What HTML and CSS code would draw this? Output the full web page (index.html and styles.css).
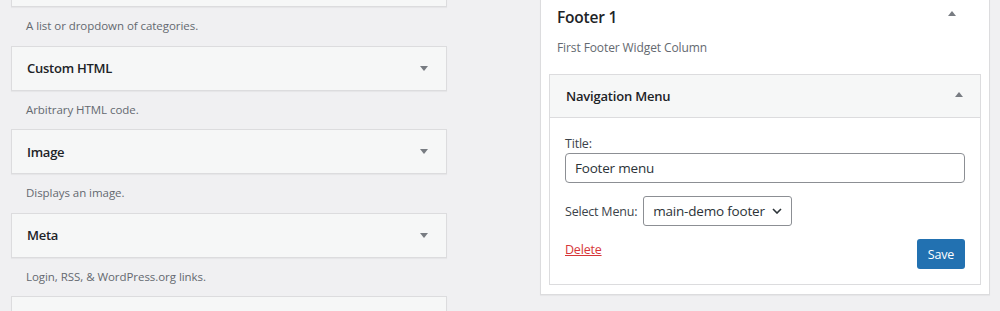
FILE: index.html
```html
<!DOCTYPE html>
<html>
<head>
<meta charset="utf-8">
<link rel="stylesheet" href="styles.css">
</head>
<body>
<div class="page">
  <div class="available">
    <div class="widget"><span class="w-title"></span></div>
    <p class="desc">A list or dropdown of categories.</p>
    <div class="widget"><span class="w-title">Custom HTML</span><span class="arrow down"></span></div>
    <p class="desc">Arbitrary HTML code.</p>
    <div class="widget"><span class="w-title">Image</span><span class="arrow down"></span></div>
    <p class="desc">Displays an image.</p>
    <div class="widget"><span class="w-title">Meta</span><span class="arrow down"></span></div>
    <p class="desc">Login, RSS, &amp; WordPress.org links.</p>
    <div class="widget last"><span class="w-title"></span></div>
  </div>
  <div class="sidebar">
    <div class="sb-head">
      <h2>Footer 1</h2>
      <span class="arrow up"></span>
    </div>
    <p class="sb-desc">First Footer Widget Column</p>
    <div class="open-widget">
      <div class="ow-head">
        <span class="ow-title">Navigation Menu</span>
        <span class="arrow up"></span>
      </div>
      <div class="ow-body">
        <label class="lbl">Title:</label>
        <div class="text-input">Footer menu</div>
        <div class="sel-row">
          <span class="lbl">Select Menu:</span>
          <div class="select">main-demo footer
            <svg class="chev" width="10" height="6" viewBox="0 0 10 6"><path d="M1 1l4 4 4-4" fill="none" stroke="#2c3338" stroke-width="1.6"/></svg>
          </div>
        </div>
        <div class="actions">
          <a class="delete">Delete</a>
          <span class="save">Save</span>
        </div>
      </div>
    </div>
  </div>
</div>
</body>
</html>
```

FILE: styles.css
```css
html, body {
  margin: 0;
  padding: 0;
  background: #f0f0f2;
  font-family: "Open Sans", "Noto Sans", sans-serif;
  color: #1d2327;
  overflow: hidden;
  height: 311px;
}
.page {
  display: flex;
  align-items: flex-start;
  padding-left: 11px;
  height: 311px;
  overflow: hidden;
}
.available {
  width: 436px;
  margin-top: -38px;
  display: flex;
  flex-direction: column;
}
.widget {
  box-sizing: border-box;
  height: 45px;
  background: #f6f7f7;
  border: 1px solid #dcdcde;
  box-shadow: 0 1px 1px rgba(0,0,0,0.04);
  display: flex;
  align-items: center;
  justify-content: space-between;
  padding: 0 18px 0 15px;
}
.widget.last { height: 20px; border-bottom: 0; }
.w-title {
  font-size: 13px;
  font-weight: 600;
  color: #1d2327;
  letter-spacing: -0.25px;
}
.desc {
  margin: 0;
  height: 38.5px;
  box-sizing: border-box;
  padding: 11px 0 0 15px;
  font-size: 11.5px;
  color: #646970;
  letter-spacing: -0.05px;
}
.arrow {
  width: 0;
  height: 0;
  border-left: 4px solid transparent;
  border-right: 4px solid transparent;
}
.arrow.down { border-top: 5px solid #787c82; }
.arrow.up { border-bottom: 5px solid #787c82; }

.sidebar {
  margin-left: 93px;
  margin-top: -1px;
  width: 450px;
  box-sizing: border-box;
  background: #fff;
  border: 1px solid #dcdcde;
  box-shadow: 0 1px 1px rgba(0,0,0,0.04);
  padding: 0 8px 9px 8px;
}
.sb-head {
  display: flex;
  justify-content: space-between;
  align-items: center;
  height: 33px;
  padding: 0 25px 4px 8px;
}
.sb-head .arrow { margin-top: -6px; }
.sb-head h2 {
  margin: 0;
  font-size: 15.5px;
  font-weight: 600;
  color: #1d2327;
  letter-spacing: -0.2px;
}
.sb-desc {
  margin: 0;
  padding: 2px 0 0 8px;
  height: 37px;
  box-sizing: border-box;
  font-size: 12px;
  color: #646970;
  letter-spacing: -0.1px;
}
.open-widget {
  border: 1px solid #dcdcde;
}
.ow-head {
  height: 43px;
  box-sizing: border-box;
  background: #f6f7f7;
  border-bottom: 1px solid #dcdcde;
  display: flex;
  justify-content: space-between;
  align-items: center;
  padding: 0 17px 0 16px;
}
.ow-head .arrow { margin-top: -3px; }
.ow-title {
  font-size: 13px;
  font-weight: 600;
  color: #1d2327;
  letter-spacing: -0.2px;
}
.ow-body {
  padding: 17px 15px 15px 15px;
}
.lbl {
  display: block;
  font-size: 12.5px;
  color: #3c434a;
  letter-spacing: -0.2px;
  line-height: 17px;
}
.text-input {
  margin-top: 1px;
  height: 30px;
  box-sizing: border-box;
  border: 1px solid #8c8f94;
  border-radius: 4px;
  padding: 0 9px;
  display: flex;
  align-items: center;
  font-size: 13.5px;
  color: #2c3338;
  letter-spacing: -0.2px;
}
.sel-row {
  display: flex;
  align-items: center;
  gap: 4px;
  margin-top: 13px;
}
.select {
  height: 30px;
  box-sizing: border-box;
  border: 1px solid #8c8f94;
  border-radius: 3px;
  padding: 0 9px 0 9px;
  margin-left: 2px;
  display: flex;
  align-items: center;
  gap: 7px;
  font-size: 13.5px;
  color: #2c3338;
  letter-spacing: -0.2px;
}
.actions {
  display: flex;
  justify-content: space-between;
  align-items: flex-start;
  margin-top: 12px;
}
.delete {
  margin-top: 3px;
  font-size: 12.5px;
  color: #d63638;
  text-decoration: underline;
  letter-spacing: -0.2px;
  line-height: 17px;
}
.save {
  margin-top: 1px;
  background: #2271b1;
  color: #fff;
  border-radius: 3px;
  font-size: 12.5px;
  width: 48px;
  height: 30px;
  display: flex;
  align-items: center;
  justify-content: center;
  letter-spacing: -0.2px;
}
```
